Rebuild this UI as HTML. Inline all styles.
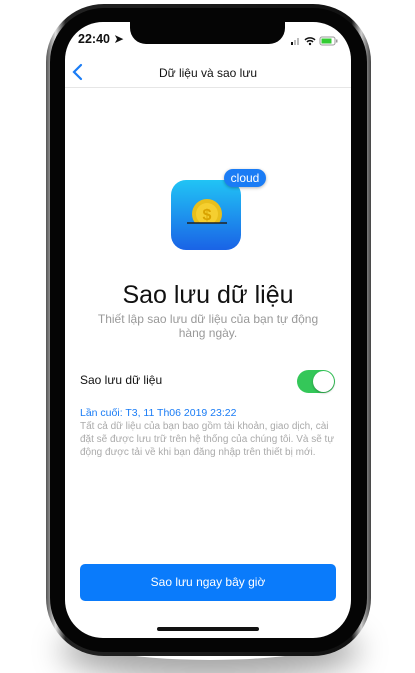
<!DOCTYPE html>
<html><head><meta charset="utf-8"><style>
*{margin:0;padding:0;box-sizing:border-box}
body{width:415px;height:673px;background:#fff;position:relative;overflow:hidden;font-family:"Liberation Sans","DejaVu Sans",sans-serif}
.shadow{position:absolute;left:60px;top:600px;width:300px;height:60px;border-radius:50%;box-shadow:0 20px 30px rgba(0,0,0,.35)}
.outer{position:absolute;left:46px;top:4px;width:325px;height:652px;border-radius:58px;background:linear-gradient(90deg,#555,#ddd 3%,#222 6%,#111 94%,#ccc 97%,#444);}
.mid{position:absolute;left:50px;top:8px;width:317px;height:644px;border-radius:54px;background:#050505}
.screen{position:absolute;left:65px;top:22px;width:286px;height:616px;border-radius:38px;background:#fff;overflow:hidden}
.notch{position:absolute;left:65px;top:0;width:155px;height:22px;background:#050505;border-radius:0 0 16px 16px}
.abs{position:absolute}
</style></head><body>
<div class="shadow"></div>
<div class="outer"></div>
<div class="mid"></div>
<div class="screen">
 <div class="notch"></div>
 <div class="abs" style="left:13px;top:9px;font-size:12.5px;font-weight:bold;color:#111">22:40 ➤</div>
 <div class="abs" style="left:224px;top:11px;width:55px;height:10px">
  <svg width="55" height="10"><rect x="2" y="6" width="2" height="3" fill="#111"/><rect x="5" y="4" width="2" height="5" fill="#bbb"/><rect x="8" y="2" width="2" height="7" fill="#bbb"/><path d="M16 4a7 7 0 0 1 10 0M18 6a4 4 0 0 1 6 0" stroke="#111" stroke-width="1.5" fill="none"/><circle cx="21" cy="8" r="1.2" fill="#111"/><rect x="31" y="1" width="15" height="8" rx="2" fill="none" stroke="#999"/><rect x="32.5" y="2.5" width="10" height="5" fill="#3c3"/><rect x="47" y="3.5" width="1.5" height="3" fill="#999"/></svg>
 </div>
 <svg class="abs" style="left:6px;top:41px" width="14" height="18"><path d="M10 2L3 9l7 7" stroke="#1a7cf5" stroke-width="2.2" fill="none" stroke-linecap="round"/></svg>
 <div class="abs" style="left:0;width:286px;top:44px;text-align:center;font-size:12px;color:#111">Dữ liệu và sao lưu</div>
 <div class="abs" style="left:0;width:286px;top:65px;height:1px;background:#e6e6e6"></div>
 <div class="abs" style="left:106px;top:158px;width:70px;height:70px;border-radius:15px;background:linear-gradient(#21c4f5,#1a63e6)"></div>
 <svg class="abs" style="left:106px;top:158px" width="70" height="70"><defs><linearGradient id="g" x1="0" y1="0" x2="0" y2="70" gradientUnits="userSpaceOnUse"><stop offset="0" stop-color="#21c4f5"/><stop offset="1" stop-color="#1a63e6"/></linearGradient></defs><circle cx="36" cy="34" r="15" fill="#e8bf1c"/><circle cx="36" cy="34" r="11" fill="#f5cf30"/><text x="36" y="40" text-anchor="middle" font-size="16" font-weight="bold" fill="#d9a300" font-family="Liberation Sans">$</text><rect x="14" y="43" width="44" height="12" fill="url(#g)"/><line x1="16" y1="43" x2="56" y2="43" stroke="#222" stroke-width="1.5"/></svg>
 <div class="abs" style="left:159px;top:147px;width:42px;height:18px;border-radius:9px;background:#1a7cf5;color:#fff;font-size:12px;text-align:center;line-height:18px;box-shadow:0 1px 3px rgba(0,0,0,.3)">cloud</div>
 <div class="abs" style="left:0;width:286px;top:259px;text-align:center;font-size:25px;color:#111">Sao lưu dữ liệu</div>
 <div class="abs" style="left:30px;width:226px;top:290px;text-align:center;font-size:12px;line-height:14px;color:#999">Thiết lập sao lưu dữ liệu của bạn tự động hàng ngày.</div>
 <div class="abs" style="left:15px;top:351px;font-size:12px;color:#111">Sao lưu dữ liệu</div>
 <div class="abs" style="left:232px;top:348px;width:38px;height:23px;border-radius:12px;background:#34c759"><div style="position:absolute;right:1px;top:1px;width:21px;height:21px;border-radius:50%;background:#fff;box-shadow:0 1px 2px rgba(0,0,0,.3)"></div></div>
 <div class="abs" style="left:15px;top:385px;font-size:10.5px;color:#1a7cf5">Lần cuối: T3, 11 Th06 2019 23:22</div>
 <div class="abs" style="left:15px;top:398px;width:262px;font-size:10px;line-height:13px;color:#aaa">Tất cả dữ liệu của bạn bao gồm tài khoản, giao dịch, cài đặt sẽ được lưu trữ trên hệ thống của chúng tôi. Và sẽ tự động được tải về khi bạn đăng nhập trên thiết bị mới.</div>
 <div class="abs" style="left:15px;top:542px;width:256px;height:37px;border-radius:5px;background:#0a7bfb;color:#fff;font-size:12px;text-align:center;line-height:37px">Sao lưu ngay bây giờ</div>
 <div class="abs" style="left:92px;top:605px;width:102px;height:4px;border-radius:2px;background:#111"></div>
</div>
</body></html>
